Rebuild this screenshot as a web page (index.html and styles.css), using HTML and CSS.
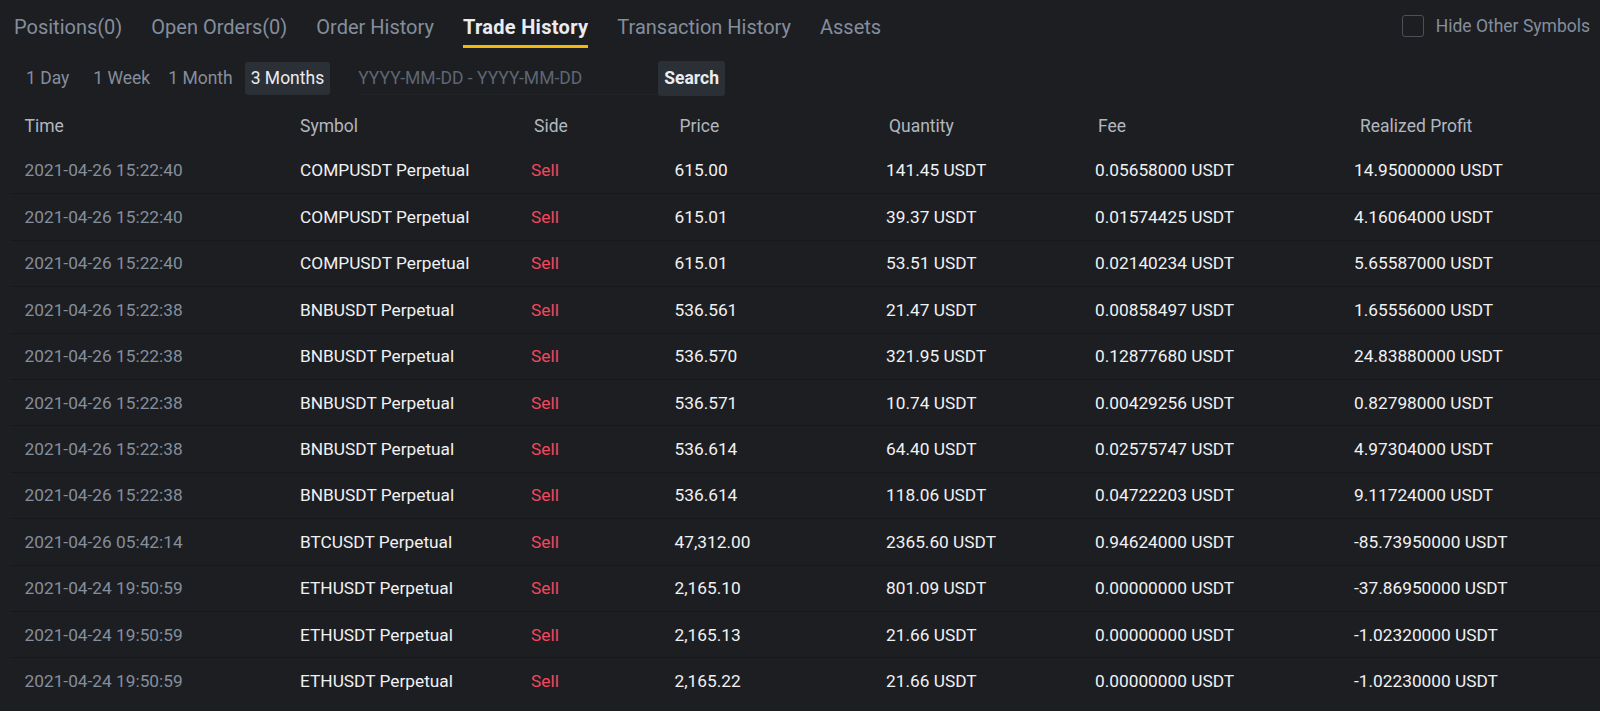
FILE: index.html
```html
<!DOCTYPE html>
<html lang="en">
<head>
<meta charset="utf-8">
<title>Trade History</title>
<link rel="stylesheet" href="styles.css">
</head>
<body>
<div class="page">
  <div class="tabs">
    <div class="tab-list">
      <span class="tab">Positions(0)</span>
      <span class="tab">Open Orders(0)</span>
      <span class="tab">Order History</span>
      <span class="tab active">Trade History</span>
      <span class="tab">Transaction History</span>
      <span class="tab">Assets</span>
    </div>
    <label class="hide-other">
      <span class="checkbox"></span>
      <span>Hide Other Symbols</span>
    </label>
  </div>

  <div class="filters">
    <span class="range">1 Day</span>
    <span class="range wide">1 Week</span>
    <span class="range">1 Month</span>
    <span class="range selected">3 Months</span>
    <span class="date-input">YYYY-MM-DD - YYYY-MM-DD</span>
    <span class="search-btn">Search</span>
  </div>

  <div class="table">
    <div class="row head">
      <span>Time</span>
      <span>Symbol</span>
      <span class="sh1">Side</span>
      <span class="sh2">Price</span>
      <span class="sh1">Quantity</span>
      <span class="sh1">Fee</span>
      <span class="sh3">Realized Profit</span>
    </div>
    <div class="row"><span class="time">2021-04-26 15:22:40</span><span>COMPUSDT Perpetual</span><span class="sell">Sell</span><span>615.00</span><span>141.45 USDT</span><span>0.05658000 USDT</span><span>14.95000000 USDT</span></div>
    <div class="row"><span class="time">2021-04-26 15:22:40</span><span>COMPUSDT Perpetual</span><span class="sell">Sell</span><span>615.01</span><span>39.37 USDT</span><span>0.01574425 USDT</span><span>4.16064000 USDT</span></div>
    <div class="row"><span class="time">2021-04-26 15:22:40</span><span>COMPUSDT Perpetual</span><span class="sell">Sell</span><span>615.01</span><span>53.51 USDT</span><span>0.02140234 USDT</span><span>5.65587000 USDT</span></div>
    <div class="row"><span class="time">2021-04-26 15:22:38</span><span>BNBUSDT Perpetual</span><span class="sell">Sell</span><span>536.561</span><span>21.47 USDT</span><span>0.00858497 USDT</span><span>1.65556000 USDT</span></div>
    <div class="row"><span class="time">2021-04-26 15:22:38</span><span>BNBUSDT Perpetual</span><span class="sell">Sell</span><span>536.570</span><span>321.95 USDT</span><span>0.12877680 USDT</span><span>24.83880000 USDT</span></div>
    <div class="row"><span class="time">2021-04-26 15:22:38</span><span>BNBUSDT Perpetual</span><span class="sell">Sell</span><span>536.571</span><span>10.74 USDT</span><span>0.00429256 USDT</span><span>0.82798000 USDT</span></div>
    <div class="row"><span class="time">2021-04-26 15:22:38</span><span>BNBUSDT Perpetual</span><span class="sell">Sell</span><span>536.614</span><span>64.40 USDT</span><span>0.02575747 USDT</span><span>4.97304000 USDT</span></div>
    <div class="row"><span class="time">2021-04-26 15:22:38</span><span>BNBUSDT Perpetual</span><span class="sell">Sell</span><span>536.614</span><span>118.06 USDT</span><span>0.04722203 USDT</span><span>9.11724000 USDT</span></div>
    <div class="row"><span class="time">2021-04-26 05:42:14</span><span>BTCUSDT Perpetual</span><span class="sell">Sell</span><span>47,312.00</span><span>2365.60 USDT</span><span>0.94624000 USDT</span><span>-85.73950000 USDT</span></div>
    <div class="row"><span class="time">2021-04-24 19:50:59</span><span>ETHUSDT Perpetual</span><span class="sell">Sell</span><span>2,165.10</span><span>801.09 USDT</span><span>0.00000000 USDT</span><span>-37.86950000 USDT</span></div>
    <div class="row"><span class="time">2021-04-24 19:50:59</span><span>ETHUSDT Perpetual</span><span class="sell">Sell</span><span>2,165.13</span><span>21.66 USDT</span><span>0.00000000 USDT</span><span>-1.02320000 USDT</span></div>
    <div class="row"><span class="time">2021-04-24 19:50:59</span><span>ETHUSDT Perpetual</span><span class="sell">Sell</span><span>2,165.22</span><span>21.66 USDT</span><span>0.00000000 USDT</span><span>-1.02230000 USDT</span></div>
  </div>
</div>
</body>
</html>
```

FILE: styles.css
```css
html, body {
  margin: 0;
  padding: 0;
  background: #1d1e22;
  height: 100%;
  overflow: hidden;
}

.page {
  font-family: Roboto, "Liberation Sans", sans-serif;
  color: #eaecef;
}

.tabs {
  display: flex;
  justify-content: space-between;
  align-items: flex-start;
  height: 48px;
  padding: 0 10px 0 14px;
}

.tab-list {
  display: flex;
  gap: 29px;
  height: 48px;
}

.tab {
  font-size: 20px;
  color: #848e9c;
  line-height: 20px;
  padding-top: 17px;
  box-sizing: border-box;
  height: 48px;
  border-bottom: 3px solid transparent;
}

.tab.active {
  color: #eaecef;
  font-weight: 700;
  letter-spacing: 0.3px;
  border-bottom-color: #f0b90b;
}

.hide-other {
  display: flex;
  align-items: center;
  gap: 12px;
  font-size: 17.5px;
  color: #848e9c;
  height: 22px;
  margin-top: 15px;
}

.checkbox {
  width: 20px;
  height: 20px;
  border: 1.5px solid #4a4f58;
  border-radius: 3px;
}

.filters {
  display: flex;
  align-items: center;
  margin-top: 13px;
  padding-left: 20px;
  height: 35px;
  font-size: 17.5px;
}

.range {
  color: #848e9c;
  padding: 0 6px;
  height: 33px;
  line-height: 33px;
  border-radius: 3px;
  margin-right: 6px;
}

.range.wide {
  margin-left: 6px;
}

.range.selected {
  background: #2b2f36;
  color: #eaecef;
}

.date-input {
  color: #5e6673;
  margin-left: 22px;
  width: 300px;
  height: 33px;
  line-height: 33px;
  border-bottom: 1px solid #202226;
  box-sizing: border-box;
}

.search-btn {
  background: #2b2f36;
  color: #eaecef;
  font-weight: 700;
  height: 35px;
  line-height: 35px;
  padding: 0 6px;
  border-radius: 3px;
}

.table {
  margin-top: 8px;
}

.row {
  display: grid;
  grid-template-columns: 275.5px 231px 143.5px 211.5px 209px 259px 1fr;
  align-items: center;
  height: 46.4px;
  margin-left: 10px;
  padding-left: 14.5px;
  font-size: 17.3px;
  font-weight: 400;
  color: #f0f1f3;
  border-top: 1px solid #17181b;
  box-sizing: border-box;
}

.row.head {
  height: 43px;
  border-top: none;
  font-size: 17.5px;
  color: #b1b7bf;
}

.row.head + .row {
  border-top: none;
}

.sh1 { padding-left: 3px; }
.sh2 { padding-left: 5px; }
.sh3 { padding-left: 6px; }

.time {
  color: #848e9c;
}

.sell {
  color: #f6465d;
}
```
